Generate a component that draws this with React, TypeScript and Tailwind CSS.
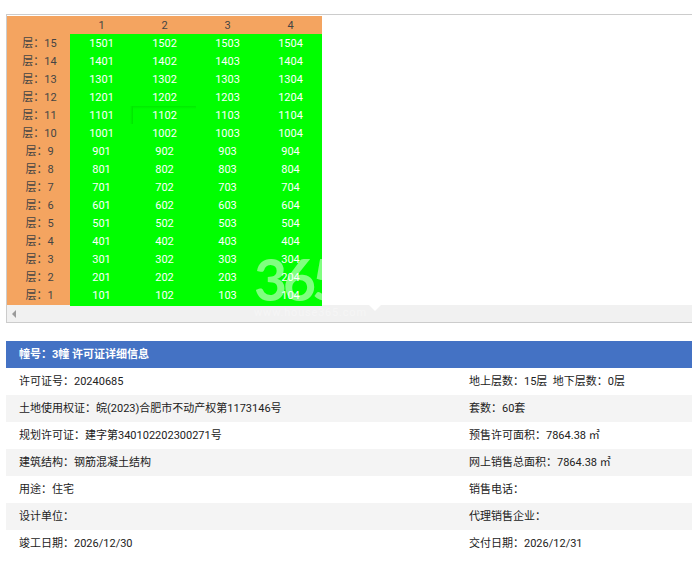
const font = "font-['Roboto','Noto_Sans_CJK_SC',sans-serif]";

const columns = [1, 2, 3, 4];
const floors = Array.from({ length: 15 }, (_, i) => 15 - i);

const details = [
  ["许可证号：20240685", "地上层数：15层  地下层数：0层"],
  ["土地使用权证：皖(2023)合肥市不动产权第1173146号", "套数：60套"],
  ["规划许可证：建字第340102202300271号", "预售许可面积：7864.38 ㎡"],
  ["建筑结构：钢筋混凝土结构", "网上销售总面积：7864.38 ㎡"],
  ["用途：住宅", "销售电话："],
  ["设计单位：", "代理销售企业："],
  ["竣工日期：2026/12/30", "交付日期：2026/12/31"],
];

function FloorTable() {
  return (
    <div className="w-[315px] pt-px">
      <div className="grid grid-cols-[63px_63px_63px_63px_63px] h-[18px] leading-[20px] bg-[#f4a460] text-[#444] text-center">
        <div />
        {columns.map((c) => (
          <div key={c}>{c}</div>
        ))}
      </div>
      {floors.map((f) => (
        <div
          key={f}
          className="grid grid-cols-[63px_63px_63px_63px_63px] h-[18px] leading-[20px] text-center"
        >
          <div className="bg-[#f4a460] text-[#444] pl-[2px] whitespace-pre">层：{f}</div>
          {columns.map((c) => (
            <div key={c} className="relative bg-[#00ff00] text-white">
              {f * 100 + c}
              {f === 11 && c === 2 && (
                <>
                  <span className="absolute left-0 top-0 w-[70px] h-[3px] bg-gradient-to-b from-[#00ea00] to-transparent" />
                  <span className="absolute left-[-3px] top-0 w-[3px] h-[18px] bg-gradient-to-r from-transparent to-[#00e400]" />
                </>
              )}
            </div>
          ))}
        </div>
      ))}
    </div>
  );
}

export default function App() {
  return (
    <div className={`relative w-[692px] h-[568px] overflow-hidden bg-white text-[11px] ${font}`}>
      <div className="pt-[14px] pl-[6px]">
        <div className="w-[686px] h-[309px] flex flex-col justify-between border-t border-l border-b border-[#ccc]">
          <FloorTable />
          <div className="h-[17px] flex items-center pl-[5px] bg-[#f1f1f1]">
            <span className="w-0 h-0 border-y-[4px] border-y-transparent border-r-[4px] border-r-[#9a9a9a]" />
          </div>
        </div>
      </div>

      <div className="mt-[18px] ml-[6px] w-[686px]">
        <div className="h-[27px] leading-[27px] pl-[13px] bg-[#4472c4] text-white font-bold">
          幢号：3幢 许可证详细信息
        </div>
        {details.map((row, i) => (
          <div
            key={row[0]}
            className={
              i % 2 === 1
                ? "grid grid-cols-[450px_1fr] h-[27px] leading-[27px] pl-[13px] text-[#222] bg-[#f4f4f4]"
                : "grid grid-cols-[450px_1fr] h-[27px] leading-[27px] pl-[13px] text-[#222] bg-white"
            }
          >
            <div>{row[0]}</div>
            <div className="whitespace-pre">{row[1]}</div>
          </div>
        ))}
      </div>

      {/* watermark over the table */}
      <div className="absolute left-[254px] top-[250px] w-[130px] pointer-events-none text-white opacity-50">
        <div className="h-[58px] leading-[58px] text-[57px] font-bold tracking-[-4px] font-['Lato',sans-serif]">
          365
        </div>
        <div className="h-[10px] leading-[10px] text-[11px] tracking-[0.8px] whitespace-nowrap opacity-70">
          www.house365.com
        </div>
      </div>
      <span className="absolute left-[369px] top-[305px] w-0 h-0 border-x-[6px] border-x-transparent border-t-[6px] border-t-white pointer-events-none" />
    </div>
  );
}
